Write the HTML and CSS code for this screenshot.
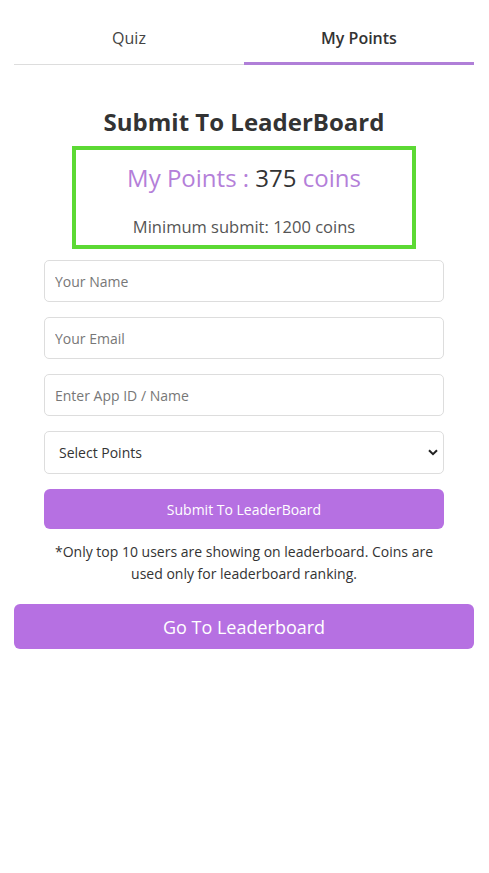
FILE: index.html
```html
<!DOCTYPE html>
<html lang="en">
<head>
<meta charset="utf-8">
<title>My Points</title>
<link rel="stylesheet" href="styles.css">
</head>
<body>
<div class="page">
  <nav class="tabs">
    <div class="tab">Quiz</div>
    <div class="tab active">My Points</div>
  </nav>

  <h2 class="title">Submit To LeaderBoard</h2>

  <div class="points-box">
    <div class="points"><span class="purple">My Points :</span> 375 <span class="purple">coins</span></div>
    <div class="minimum">Minimum submit: 1200 coins</div>
  </div>

  <form class="form">
    <input class="field" type="text" placeholder="Your Name">
    <input class="field" type="email" placeholder="Your Email">
    <input class="field" type="text" placeholder="Enter App ID / Name">
    <div class="select-wrap">
      <select class="field select">
        <option>Select Points</option>
      </select>
      <svg class="chevron" width="10" height="7" viewBox="0 0 10 7"><path d="M1 1.2 L5 5.2 L9 1.2" fill="none" stroke="#222" stroke-width="2"/></svg>
    </div>
    <button type="button" class="btn btn-submit">Submit To LeaderBoard</button>
    <p class="note">*Only top 10 users are showing on leaderboard. Coins are used only for leaderboard ranking.</p>
  </form>

  <button type="button" class="btn btn-go">Go To Leaderboard</button>
</div>
</body>
</html>
```

FILE: styles.css
```css
* { box-sizing: border-box; }

body {
  margin: 0;
  background: #fff;
  font-family: "Open Sans", "Liberation Sans", sans-serif;
  color: #333;
}

.page {
  padding: 14px 15px 14px 14px;
  display: flex;
  flex-direction: column;
  align-items: center;
}

.tabs {
  display: flex;
  width: 100%;
  align-items: flex-end;
}

.tab {
  flex: 1;
  height: 51px;
  display: flex;
  align-items: center;
  justify-content: center;
  font-size: 16px;
  color: #444;
  border-bottom: 1px solid #ddd;
  padding-bottom: 2px;
}

.tab.active {
  font-weight: 600;
  color: #333;
  border-bottom: 3px solid #b07fd8;
  padding-bottom: 0;
}

.title {
  margin: 42px 0 9px;
  font-size: 24px;
  line-height: 30px;
  font-weight: 700;
  color: #333;
  text-align: center;
}

.points-box {
  width: 344px;
  border: 4px solid #5cd934;
  padding: 13px 0 6px;
  text-align: center;
}

.points {
  font-size: 24px;
  line-height: 30px;
  color: #333;
}

.purple { color: #b47fd9; }

.minimum {
  margin-top: 22px;
  font-size: 16.5px;
  line-height: 24px;
  color: #555;
}

.form {
  width: 400px;
  margin-top: 11px;
  display: flex;
  flex-direction: column;
  gap: 15px;
}

.field {
  display: block;
  width: 100%;
  height: 42px;
  border: 1px solid #ddd;
  border-radius: 5px;
  padding: 0 10px;
  font-family: inherit;
  font-size: 14px;
  color: #333;
  background: #fff;
  outline: none;
}

.field::placeholder { color: #777; }

.select-wrap { position: relative; }

.select {
  height: 43px;
  padding-left: 14px;
  appearance: none;
  -webkit-appearance: none;
  color: #333;
}

.chevron {
  position: absolute;
  right: 6px;
  top: 18px;
  pointer-events: none;
}

.btn {
  display: block;
  width: 100%;
  border: none;
  border-radius: 6px;
  background: #b670e2;
  color: #fff;
  font-family: inherit;
  cursor: pointer;
}

.btn-submit {
  height: 40px;
  font-size: 14px;
}

.note {
  margin: -3px 0 0;
  font-size: 14px;
  line-height: 22px;
  text-align: center;
  color: #333;
}

.btn-go {
  margin-top: 19px;
  height: 45px;
  font-size: 18px;
}
```
